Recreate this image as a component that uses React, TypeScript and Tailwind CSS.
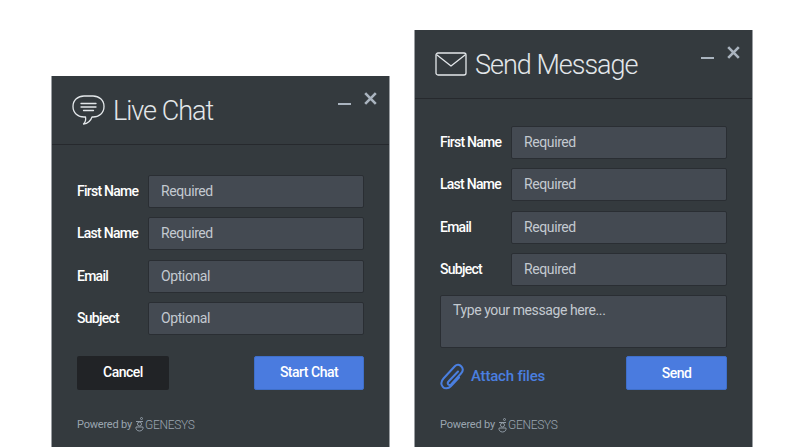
import React from 'react';

const ChatIcon = () => (
  <svg width="33" height="30" viewBox="0 0 33 30" fill="none" stroke="#e3e7ea" strokeWidth="1.300" strokeLinecap="round" strokeLinejoin="round" className="shrink-0">
    <path d="M12 1h9c6 0 11 4 11 10.500S27 22 21 22h-1c-1 3-4 6.500-8.500 7 2-2 2.500-4.500 2-7H12C6 22 1 18 1 11.500S6 1 12 1z" />
    <path d="M9 8.500h15M9 12h15M11.500 15.500h10" />
  </svg>
);

const MailIcon = () => (
  <svg width="32" height="24" viewBox="0 0 32 24" fill="none" stroke="#e3e7ea" strokeWidth="1.300" strokeLinecap="round" strokeLinejoin="round" className="shrink-0">
    <rect x="1" y="1" width="30" height="22" rx="2" />
    <path d="M2 3l14 11L30 3" />
  </svg>
);

const ClipIcon = () => (
  <svg width="24" height="27" viewBox="0 0 24 27" fill="none" stroke="#4a7fe0" strokeWidth="2" strokeLinecap="round" strokeLinejoin="round" className="shrink-0">
    <path d="M18 8.500L8.500 18.500c-1 1-1 2.300-.2 3s2 .6 3-.4L21 10.500c2-2.200 2.200-5 .4-7S17 1 14.800 3.200L3.500 15.500C1 18.300.8 21.500 2.800 23.800s5.500 2 8-.6l8.200-8.700" />
  </svg>
);

const GenesysMark = () => (
  <svg width="9" height="15" viewBox="0 0 9 15" fill="none" stroke="#8f9aa5" strokeWidth="1" className="shrink-0">
    <circle cx="6.500" cy="1.500" r="1" />
    <path d="M1 4.500h7" />
    <circle cx="4.500" cy="7" r="2" />
    <path d="M1 10h7c.5 2-1 4-3.500 4S.5 12 1 10z" />
  </svg>
);

const Field = ({ label, hint }: { label: string; hint: string }) => (
  <div className="flex items-center">
    <label className="w-[71px] shrink-0 text-[14px] font-medium tracking-[-0.75px] text-white">{label}</label>
    <div className="flex h-[33px] flex-1 items-center rounded-[2px] border border-[#2a2e33] bg-[#444a52] pl-[12px] text-[14px] tracking-[-0.4px] text-[#c3c9d0]">
      {hint}
    </div>
  </div>
);

const Header = ({ icon, title }: { icon: React.ReactNode; title: string }) => (
  <div className="relative flex h-[69px] items-center border-b border-[#26292d] pl-[20px]">
    {icon}
    <span className="mt-[2px] ml-[8px] text-[27px] leading-none font-light tracking-[-1px] text-[#e3e7ea]">{title}</span>
    <div className="absolute top-[16px] right-[12px] flex items-center gap-[13px]">
      <span className="mt-[10px] h-[2px] w-[13px] bg-[#aab4bf]" />
      <svg width="13" height="13" viewBox="0 0 13 13" stroke="#aab4bf" strokeWidth="2.600">
        <path d="M1.200 1.200l10.600 10.600M11.800 1.200L1.200 11.800" />
      </svg>
    </div>
  </div>
);

const Powered = () => (
  <div className="flex items-center text-[11px] tracking-[-0.2px] text-[#9aa5b0]">
    <span className="mr-[3px]">Powered by</span>
    <GenesysMark />
    <span className="ml-[1px] text-[12px] font-light tracking-[-0.3px]">GENESYS</span>
  </div>
);

export default function App() {
  return (
    <div className="flex h-[447px] w-[800px] items-start overflow-hidden bg-white font-['Roboto',sans-serif]">
      {/* Live Chat */}
      <div className="mt-[76px] ml-[51px] h-[371px] w-[339px] shrink-0 border-x border-[#9a9ea2] bg-[#343a3e]">
        <Header icon={<ChatIcon />} title="Live Chat" />
        <div className="flex flex-col gap-[9.300px] pt-[30px] pr-[25px] pl-[25px]">
          <Field label="First Name" hint="Required" />
          <Field label="Last Name" hint="Required" />
          <Field label="Email" hint="Optional" />
          <Field label="Subject" hint="Optional" />
        </div>
        <div className="flex justify-between pt-[21px] pr-[25px] pl-[25px]">
          <button className="h-[34px] w-[92px] rounded-[2px] bg-[#212326] text-[14px] font-medium tracking-[-0.5px] text-white">Cancel</button>
          <button className="h-[34px] w-[110px] rounded-[2px] border border-[#3f6fc9] bg-[#4a7bdf] text-[14px] font-medium tracking-[-0.5px] text-white">Start Chat</button>
        </div>
        <div className="pt-[26px] pl-[25px]">
          <Powered />
        </div>
      </div>

      {/* Send Message */}
      <div className="mt-[30px] ml-[24px] h-[417px] w-[339px] shrink-0 border-x border-[#9a9ea2] bg-[#343a3e]">
        <Header icon={<MailIcon />} title="Send Message" />
        <div className="flex flex-col gap-[9.300px] pt-[27px] pr-[25px] pl-[25px]">
          <Field label="First Name" hint="Required" />
          <Field label="Last Name" hint="Required" />
          <Field label="Email" hint="Required" />
          <Field label="Subject" hint="Required" />
          <div className="h-[53px] rounded-[2px] border border-[#2a2e33] bg-[#444a52] pt-[4px] pl-[12px] text-[14px] tracking-[-0.4px] text-[#c3c9d0]">
            Type your message here...
          </div>
        </div>
        <div className="flex items-start justify-between pt-[8px] pr-[25px] pl-[25px]">
          <div className="mt-[7px] flex items-center gap-[7px] text-[15px] font-medium tracking-[-0.2px] text-[#4a7fe0]">
            <ClipIcon />
            <span>Attach files</span>
          </div>
          <button className="h-[34px] w-[101px] rounded-[2px] border border-[#3f6fc9] bg-[#4a7bdf] text-[14px] font-medium tracking-[-0.5px] text-white">Send</button>
        </div>
        <div className="pt-[26px] pl-[25px]">
          <Powered />
        </div>
      </div>
    </div>
  );
}
